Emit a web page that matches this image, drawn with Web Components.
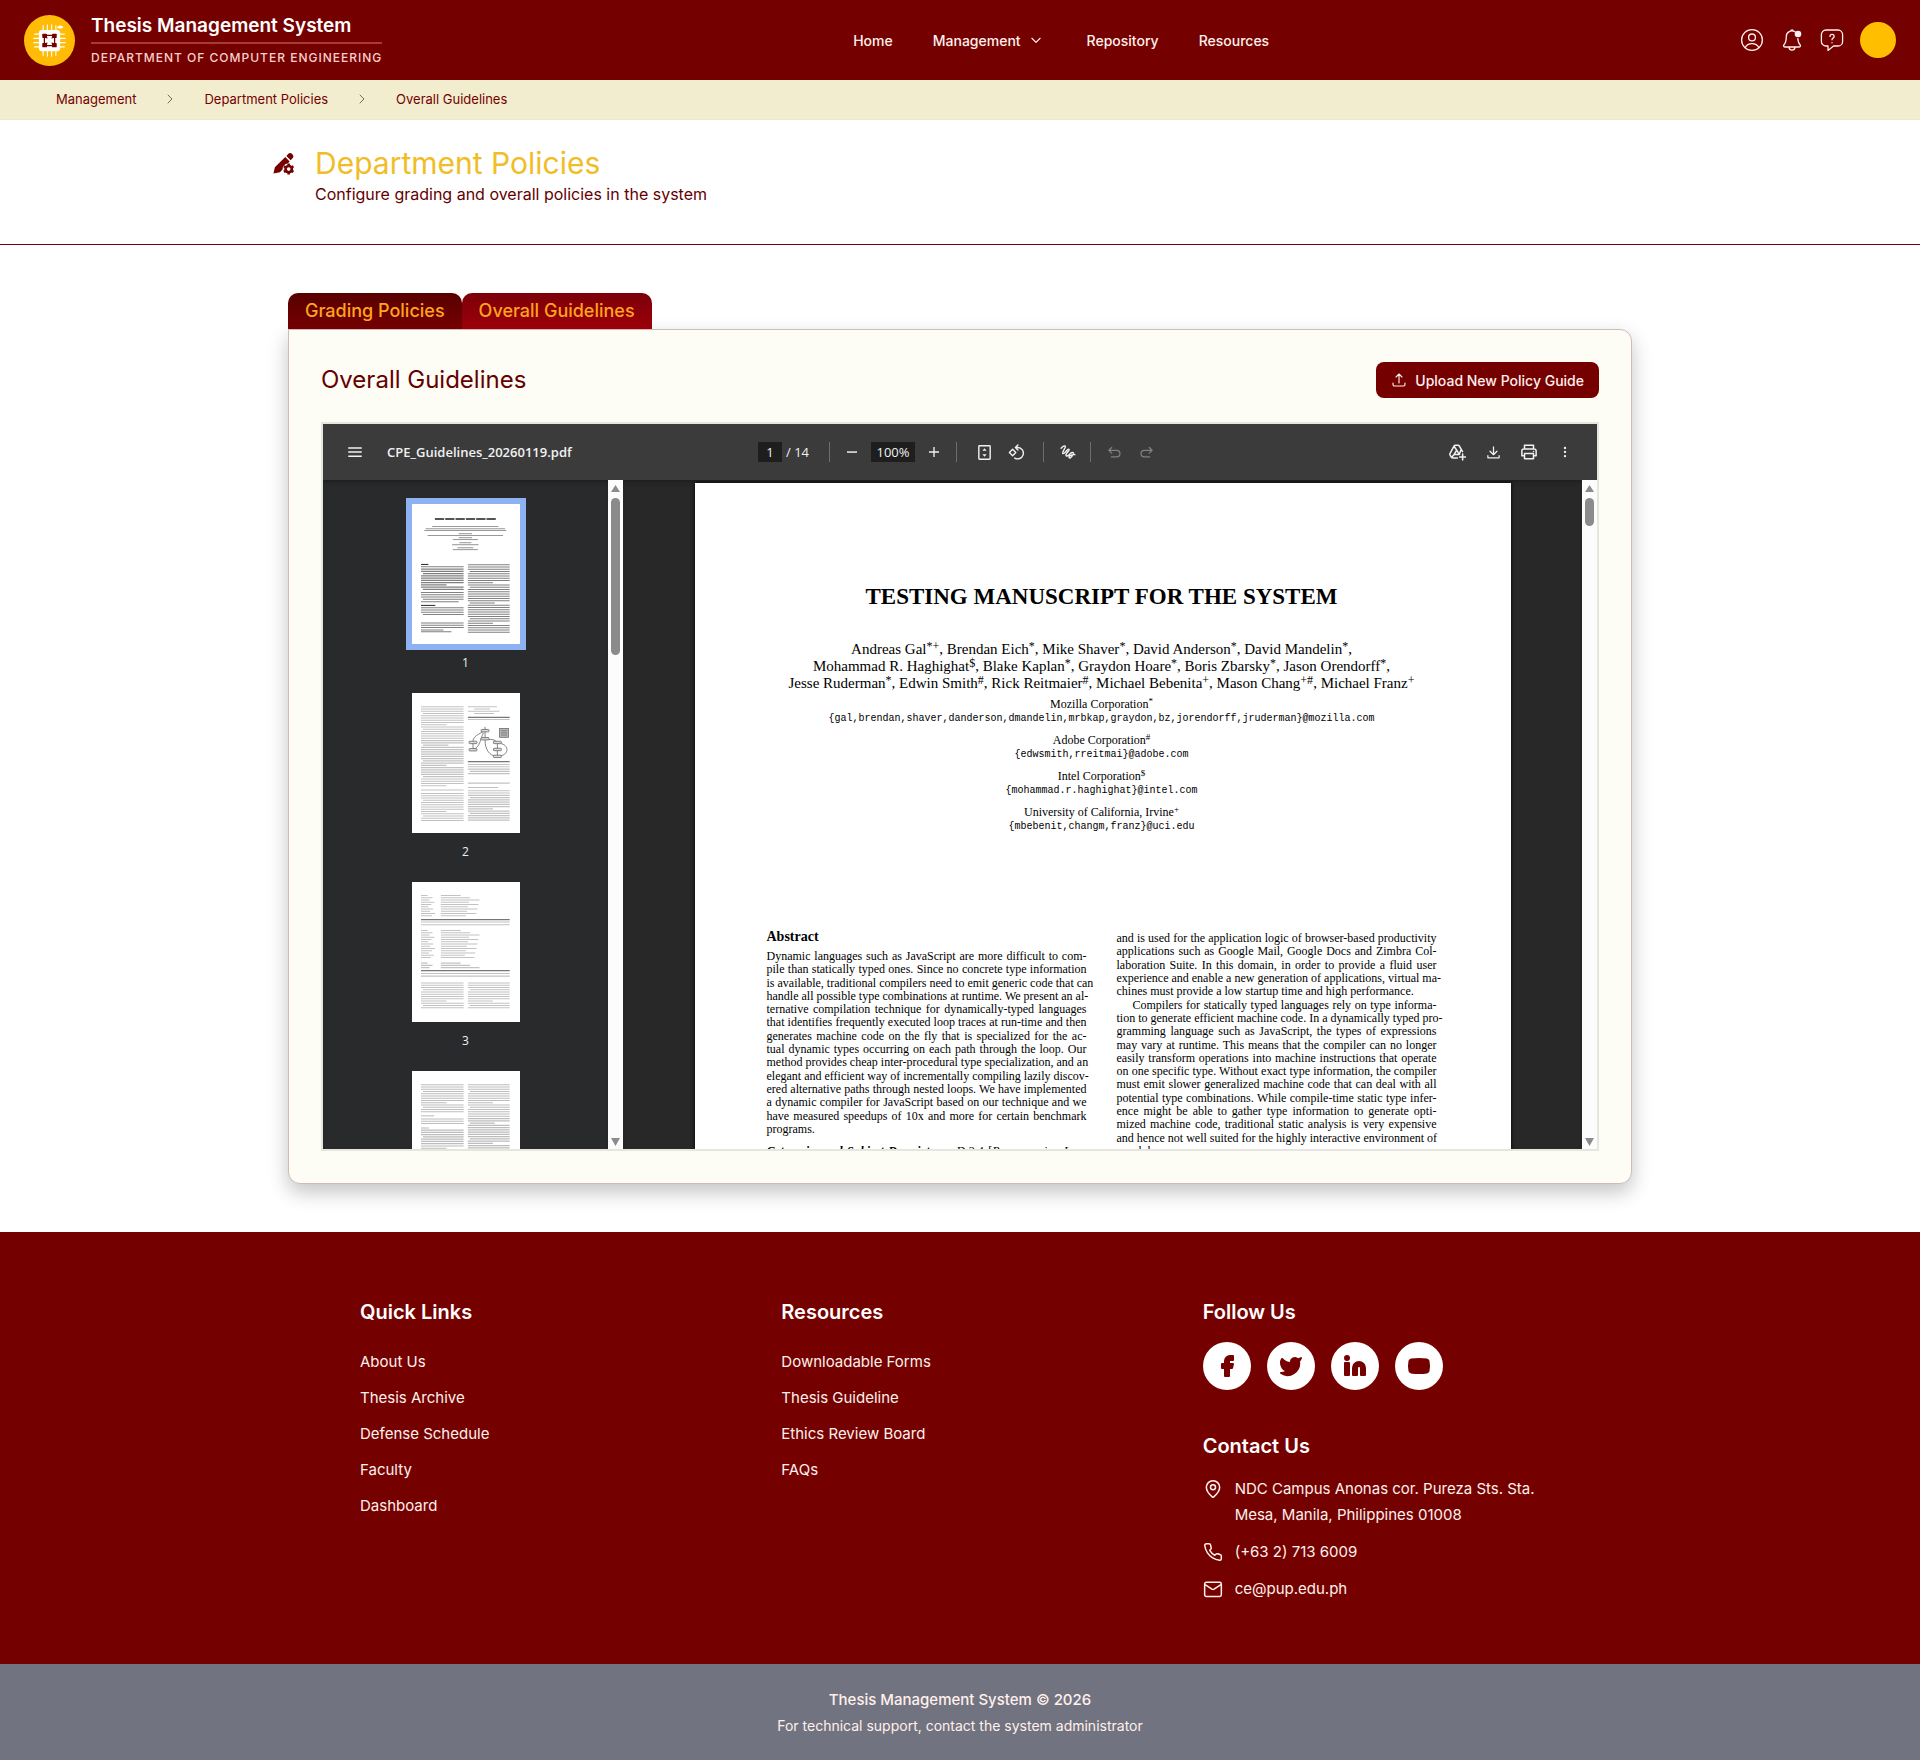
<!DOCTYPE html>
<html lang="en">
<head>
<meta charset="utf-8">
<title>Thesis Management System</title>
<style>
  body {
    margin: 0;
    background: #fff;
    color: #640000;
    font-family: Inter, "Liberation Sans", sans-serif;
    --maroon: #750000;
    --gold: #ffbf00;
  }
</style>
</head>
<body>

<site-header></site-header>
<crumb-trail>
  <a href="#management">Management</a>
  <a href="#policies">Department Policies</a>
  <a href="#guidelines">Overall Guidelines</a>
</crumb-trail>

<main>
  <page-heading>
    <span slot="title">Department Policies</span>
    <span slot="subtitle">Configure grading and overall policies in the system</span>
  </page-heading>
  <policy-card>
    <span slot="title">Overall Guidelines</span>
    <pdf-viewer></pdf-viewer>
  </policy-card>
</main>

<site-footer></site-footer>

<script>
// Attaches an open shadow root filled from a template string.
function render(host, html) {
  const template = document.createElement("template");
  template.innerHTML = html;
  const shadow = host.attachShadow({mode: "open"});
  shadow.appendChild(template.content.cloneNode(true));
  return shadow;
}

const line = (body, width = 2) =>
  `<g fill="none" stroke="currentColor" stroke-width="${ width }" stroke-linecap="round" stroke-linejoin="round">${ body }</g>`;
const solid = body =>
  `<g fill="currentColor" stroke="currentColor" stroke-width="2" stroke-linejoin="round" stroke-linecap="round">${ body }</g>`;

const ICONS = {
  logo: `
    <circle cx="12" cy="12" r="12" fill="#ffbb05"/>
    <g stroke="#fff" stroke-width=".5" stroke-linecap="round">
      <path d="M9 5v14M11 4.6v14.8M13 4.6v14.8M15 5v14M5 9h14M4.6 11h14.8M4.6 13h14.8M5 15h14"/>
    </g>
    <rect x="7" y="7" width="10" height="10" rx="1.4" fill="#fff"/>
    <path d="M9.6 9.6l4.8 4.8M14.4 9.6l-4.8 4.8M9.6 9.6v4.8M14.4 9.6v4.8M9.6 9.6h4.8M9.6 14.4h4.8" stroke="#750000" stroke-width=".6"/>
    <g fill="#750000">
      <rect x="8.6" y="8.8" width="2.2" height="2" rx=".3"/><rect x="13.2" y="8.8" width="2.2" height="2" rx=".3"/>
      <rect x="8.6" y="13.2" width="2.2" height="2" rx=".3"/><rect x="13.2" y="13.2" width="2.2" height="2" rx=".3"/>
    </g>
    <circle cx="12" cy="12" r="1.4" fill="#fff"/>
    <path d="M15.4 5.8q1.7-1.8 3.2 0-1.5 1.4-3.2 0z" fill="#fff"/>`,
  chevronDown: line(`<path d="m5 9 7 7 7-7"/>`),
  chevronRight: line(`<path d="m9 6 6 6-6 6"/>`, 1.5),
  user: line(`<circle cx="12" cy="12" r="10.4"/><circle cx="12" cy="9.4" r="3.4"/><path d="M5.2 19.6c1.2-2.6 3.6-4 6.8-4s5.6 1.4 6.8 4"/>`, 1.3),
  bell: line(`<path d="M15 3.8A5.6 5.6 0 0 0 6.3 8.6c0 4.8-1.1 6.9-2.3 8.2-.9 1-.4 2.2.8 2.2h14.4c1.2 0 1.7-1.2.8-2.2-1-1.1-1.9-2.8-2.2-6.2M10.7 3.2c0-1.6 2.6-1.6 2.6 0M9 19.4c.4 3.6 5.6 3.6 6 0"/>`, 1.3)
    + `<circle cx="18" cy="6" r="3.3" fill="currentColor"/>`,
  help: line(`<path d="M6 2h12a4.600 4.600 0 0 1 4.600 4.600v6.800A4.600 4.600 0 0 1 18 18h-4.500L8 22.400V18H6a4.600 4.600 0 0 1-4.600-4.600V6.600A4.600 4.600 0 0 1 6 2z"/><path d="M10 8.400c0-2.800 4.100-2.600 4.100 0 0 1.700-2.100 1.700-2.100 3.400M12 14.600v.2"/>`, 1.3),
  penGear: `
    <g fill="currentColor">
      <path d="M1.500 22.500 3 15.800 13.800 5.200l4.600 4.600-2 2.200a6 6 0 0 0-5.400 6.200L8.200 21z"/>
      <path d="m15 4.100 1.600-1.700a3.100 3.100 0 0 1 4.600 0 3.100 3.100 0 0 1 0 4.400l-1.700 1.800z"/>
      <circle cx="17.400" cy="17.800" r="4.600"/>
    </g>
    <path d="M17.400 12v11.600M12.400 14.900l10 5.800M12.400 20.700l10-5.800" stroke="currentColor" stroke-width="2.600"/>
    <circle cx="17.400" cy="17.800" r="1.900" fill="#fff"/>`,
  upload: line(`<path d="M3 16.500v2.250A2.250 2.250 0 0 0 5.250 21h13.500A2.250 2.250 0 0 0 21 18.750V16.500M7.500 7.500 12 3l4.500 4.500M12 3v13.500"/>`, 1.7),
  menu: `<path d="M3 5.500h18v2H3zM3 11h18v2H3zM3 16.500h18v2H3z" fill="currentColor"/>`,
  minus: `<path d="M4.500 11h15v2.200h-15z" fill="currentColor"/>`,
  plus: `<path d="M4.500 11H11V4.500h2V11h6.500v2H13v6.500h-2V13H4.500z" fill="currentColor"/>`,
  fitPage: line(`<rect x="4" y="2.500" width="16" height="19" rx="1"/>`)
    + `<path d="m9 9.500 3-3.500 3 3.500zM9 14.500l3 3.500 3-3.500z" fill="currentColor"/>`,
  rotate: line(`<path d="m2 12 4.500-4.500L11 12l-4.500 4.500zM11.500 5H14a8 8 0 1 1-4.500 14.800M14 1.500 10.500 5 14 8.500"/>`),
  draw: line(`<path d="M3 6c2-2.500 5.500-4.500 6-2.500S3.500 12 5.500 13.500 12 6 14 7.500 8 14 10 16.500c1 1.500 4-1 6-3s5-2 4.500 0-4.500 7.500-6 6 2-5 8-4.500"/>`),
  undo: line(`<path d="M7.500 4 3 8.500 7.500 13M3.500 8.500h12a5 5 0 0 1 0 10.500H7"/>`),
  redo: line(`<path d="M16.500 4 21 8.500 16.500 13M20.500 8.500h-12a5 5 0 0 0 0 10.500H17"/>`),
  drive: line(`<path d="M12.500 20H6.500c-1 0-1.800-.5-2.300-1.400l-1.400-2.400c-.4-.8-.4-1.600 0-2.400L7.800 4.400C8.300 3.500 9 3 10 3h3.200c1 0 1.700.5 2.200 1.400l4 7M11.600 9.500l-3.400 5.800h6.800zM11.600 9.500 8 4.300M8.200 15.300l-3.600 4M15 15.300l2.500-6.500M19.500 14.500v8M15.500 18.500h8"/>`),
  download: line(`<path d="M12 3v12M6.500 10l5.500 5.500 5.500-5.500M3 17v3.500h18V17"/>`),
  print: line(`<path d="M6 8V3h12v5M6 17H2.500v-6.500A2.500 2.500 0 0 1 5 8h14a2.500 2.500 0 0 1 2.500 2.500V17H18M6 14h12v7H6z"/>`)
    + `<circle cx="18" cy="11.200" r="1" fill="currentColor"/>`,
  more: `<g fill="currentColor"><circle cx="12" cy="5" r="2"/><circle cx="12" cy="12" r="2"/><circle cx="12" cy="19" r="2"/></g>`,
  facebook: solid(`<path d="M18 2h-3a5 5 0 0 0-5 5v3H7v4h3v8h4v-8h3l1-4h-4V7a1 1 0 0 1 1-1h3z"/>`),
  twitter: solid(`<path d="M22 4s-.7 2.100-2 3.400c1.600 10-9.400 17.300-18 11.600 2.200.1 4.400-.6 6-2C3 15.500.5 9.600 3 5c2.200 2.600 5.600 4.100 9 4-.9-4.200 4-6.600 7-3.800 1.100 0 3-1.200 3-1.200z"/>`),
  linkedin: solid(`<path d="M16 8a6 6 0 0 1 6 6v7h-4v-7a2 2 0 0 0-4 0v7h-4v-7a6 6 0 0 1 6-6z"/><path d="M2 9h4v12H2z"/><circle cx="4" cy="4" r="2"/>`),
  youtube: solid(`<path d="M2.500 17a24.120 24.120 0 0 1 0-10 2 2 0 0 1 1.400-1.400 49.560 49.560 0 0 1 16.200 0A2 2 0 0 1 21.500 7a24.120 24.120 0 0 1 0 10 2 2 0 0 1-1.400 1.400 49.550 49.550 0 0 1-16.200 0A2 2 0 0 1 2.500 17"/>`),
  pin: line(`<path d="M20 10c0 5-5.500 10.200-7.400 11.800a1 1 0 0 1-1.200 0C9.500 20.200 4 15 4 10a8 8 0 0 1 16 0"/><circle cx="12" cy="10" r="3"/>`, 1.8),
  phone: line(`<path d="M22 16.920v3a2 2 0 0 1-2.180 2 19.790 19.790 0 0 1-8.630-3.070 19.500 19.500 0 0 1-6-6 19.790 19.790 0 0 1-3.070-8.670A2 2 0 0 1 4.110 2h3a2 2 0 0 1 2 1.720c.13.960.36 1.900.7 2.810a2 2 0 0 1-.45 2.110L8.090 9.910a16 16 0 0 0 6 6l1.270-1.270a2 2 0 0 1 2.110-.45c.91.340 1.850.57 2.810.7A2 2 0 0 1 22 16.920z"/>`, 1.8),
  mail: line(`<rect x="2" y="4" width="20" height="17" rx="2"/><path d="m3 7 7.700 5.200a2.500 2.500 0 0 0 2.600 0L21 7"/>`, 1.8),
};

class AppIcon extends HTMLElement {
  connectedCallback() {
    if (this.shadowRoot) return;
    const size = this.getAttribute("size") || 24;
    render(this, `
      <style>
        :host { display: block; flex: none; line-height: 0; }
      </style>
      <svg width="${ size }" height="${ size }" viewBox="0 0 24 24" aria-hidden="true">${ ICONS[this.getAttribute("name")] }</svg>
    `);
  }
}

class SiteHeader extends HTMLElement {
  constructor() {
    super();
    render(this, `
      <style>
        :host {
          display: flex;
          justify-content: space-between;
          align-items: center;
          height: 80px;
          padding: 0 24px;
          background: var(--maroon);
          color: #fff0ec;
        }
        .brand, nav, .actions { display: flex; align-items: center; }
        .brand { gap: 16px; color: inherit; text-decoration: none; }
        .name {
          font-size: 19px;
          font-weight: 600;
          line-height: 26px;
          padding-bottom: 3px;
          border-bottom: 2px solid #a63c36;
          color: #fff;
        }
        .dept {
          margin-top: 4px;
          font-size: 12px;
          font-weight: 500;
          line-height: 20px;
          letter-spacing: 1px;
          color: #f8cfcb;
        }
        nav { gap: 40px; font-size: 14px; font-weight: 500; }
        nav a, nav button { color: inherit; text-decoration: none; font: inherit; }
        button { border: 0; padding: 0; background: none; color: inherit; cursor: pointer; }
        nav button { display: flex; align-items: center; gap: 8px; padding-right: 4px; }
        .actions { gap: 16px; }
        .avatar { width: 36px; height: 36px; border-radius: 50%; background: var(--gold); }
      </style>
      <a class="brand" href="#home">
        <app-icon name="logo" size="51"></app-icon>
        <div>
          <div class="name">Thesis Management System</div>
          <div class="dept">DEPARTMENT OF COMPUTER ENGINEERING</div>
        </div>
      </a>
      <nav>
        <a href="#home">Home</a>
        <button type="button">Management <app-icon name="chevronDown" size="14"></app-icon></button>
        <a href="#repository">Repository</a>
        <a href="#resources">Resources</a>
      </nav>
      <div class="actions">
        <button type="button" aria-label="Account"><app-icon name="user"></app-icon></button>
        <button type="button" aria-label="Notifications"><app-icon name="bell"></app-icon></button>
        <button type="button" aria-label="Help"><app-icon name="help"></app-icon></button>
        <button type="button" class="avatar" aria-label="Profile"></button>
      </div>
    `);
  }
}

class CrumbTrail extends HTMLElement {
  connectedCallback() {
    if (this.shadowRoot) return;
    // One named slot per crumb, so a chevron can go between them.
    const links = [...this.children];
    links.forEach((link, i) => link.slot = "crumb" + i);
    render(this, `
      <style>
        :host { display: block; background: #f2edcf; border-bottom: 1px solid #ebe8d3; }
        nav {
          display: flex;
          align-items: center;
          gap: 26px;
          height: 37px;
          padding: 0 56px 2px;
          font-size: 13px;
          color: #7d6b50;
        }
        ::slotted(a) { color: var(--maroon); text-decoration: none; }
      </style>
      <nav aria-label="Breadcrumb">
        ${ links.map((_, i) => `<slot name="crumb${ i }"></slot>`).join(`<app-icon name="chevronRight" size="16"></app-icon>`) }
      </nav>
    `);
  }
}

class PageHeading extends HTMLElement {
  constructor() {
    super();
    render(this, `
      <style>
        :host { display: block; border-bottom: 1px solid #75000f; }
        .inner {
          display: flex;
          gap: 20px;
          max-width: 1376px;
          margin: 0 auto;
          padding: 24px 0 38px;
        }
        app-icon { margin-top: 8px; color: var(--maroon); }
        h1 { margin: 0; font-size: 30px; font-weight: 400; line-height: 38px; color: #f0bd27; }
        p { margin: 0; font-size: 16px; line-height: 24px; }
      </style>
      <div class="inner">
        <app-icon name="penGear" size="23"></app-icon>
        <div>
          <h1><slot name="title"></slot></h1>
          <p><slot name="subtitle"></slot></p>
        </div>
      </div>
    `);
  }
}

class PolicyCard extends HTMLElement {
  constructor() {
    super();
    render(this, `
      <style>
        :host { display: block; width: 70%; margin: 48px auto; }
        .tabs { display: flex; }
        .tabs button {
          height: 36px;
          padding: 0 17px 2px;
          border: 0;
          border-radius: 10px 10px 0 0;
          background: linear-gradient(#580000, #750000);
          color: #ffa41c;
          font: 500 18px Inter, sans-serif;
          cursor: pointer;
        }
        .tabs button[aria-selected="true"] { background: linear-gradient(#7c0009, #9c0009); }
        .card {
          padding: 32px;
          border: 1px solid #cdbcb8;
          border-radius: 0 12px 12px 12px;
          background: #fefdf5;
          box-shadow: 0 8px 20px rgba(0, 0, 0, .24);
        }
        header {
          display: flex;
          justify-content: space-between;
          align-items: center;
          margin-bottom: 24px;
        }
        h2 { margin: 0; font-size: 24px; font-weight: 400; line-height: 32px; }
        .upload {
          display: flex;
          align-items: center;
          gap: 8px;
          height: 36px;
          padding: 0 15px;
          border: 0;
          border-radius: 8px;
          background: var(--maroon);
          color: #fff0ec;
          font: 500 14px Inter, sans-serif;
          cursor: pointer;
        }
      </style>
      <div class="tabs" role="tablist">
        <button type="button" role="tab" aria-selected="false">Grading Policies</button>
        <button type="button" role="tab" aria-selected="true">Overall Guidelines</button>
      </div>
      <section class="card">
        <header>
          <h2><slot name="title"></slot></h2>
          <button type="button" class="upload"><app-icon name="upload" size="16"></app-icon>Upload New Policy Guide</button>
        </header>
        <slot></slot>
      </section>
    `);
  }
}

class PdfScrollbar extends HTMLElement {
  constructor() {
    super();
    render(this, `
      <style>
        :host {
          display: flex;
          flex-direction: column;
          align-items: center;
          justify-content: space-between;
          box-sizing: border-box;
          width: 15px;
          padding: 5px 0 3px;
          background: #fcfcfc;
        }
        svg { display: block; }
        .thumb { width: 9px; height: var(--thumb); margin-top: 6px; border-radius: 5px; background: #8b8b8b; }
      </style>
      <div>
        <svg width="9" height="7" viewBox="0 0 9 7"><path d="M4.500 0 9 7H0z" fill="#8b8b8b"/></svg>
        <div class="thumb"></div>
      </div>
      <svg width="9" height="8" viewBox="0 0 9 8"><path d="M0 0h9L4.500 8z" fill="#8b8b8b"/></svg>
    `);
  }
}

// Ruled rows standing in for set text on a page of 816 by 1056 units.
function rows(x, y, width, count, step = 17) {
  let d = "";
  for (let i = 0; i < count; i++) {
    const indent = i % 7 === 3 ? 14 : 0;
    const length = i % 9 === 8 ? width * .6 : width - indent;
    d += `M${ x + indent } ${ y + i * step }h${ length }`;
  }
  return `<path d="${ d }"/>`;
}

function centred(y, width) {
  return `<path d="M${ 403 - width / 2 } ${ y }h${ width }"/>`;
}

function tableRows(y, count) {
  let out = "";
  for (let i = 0; i < count; i++) {
    out += `<path d="M68 ${ y + i * 17 }h${ 50 + (i * 37) % 60 }M218 ${ y + i * 17 }h${ 150 + (i * 71) % 150 }"/>`;
  }
  return out;
}

const NODES = [[552, 284], [552, 345], [461, 373], [461, 428], [645, 373], [645, 426], [645, 478]];

const THUMBS = [
  `<g stroke="#555" stroke-width="14" stroke-dasharray="70 8">${ centred(113, 460) }</g>
   <g stroke="#999">
     ${ centred(170, 500) }${ centred(186, 600) }${ centred(200, 620) }${ centred(224, 100) }${ centred(238, 570) }
     ${ centred(254, 100) }${ centred(268, 190) }${ centred(292, 90) }${ centred(307, 200) }${ centred(330, 120) }${ centred(344, 190) }
   </g>
   <g stroke="#808080">
     <path d="M68 456h56" stroke="#333"/>
     ${ rows(68, 474, 322, 11) }${ rows(68, 668, 322, 4) }<path d="M68 737h285"/><path d="M68 765h108" stroke="#333"/>
     ${ rows(68, 782, 322, 4) }${ rows(68, 898, 322, 3) }<path d="M68 950h170M68 964h230"/>
     ${ rows(422, 458, 316, 31) }
   </g>`,
  `<g stroke="#c2c2c2">
     ${ rows(68, 104, 322, 36) }${ rows(68, 732, 322, 1) }${ rows(68, 758, 322, 13) }
     <path d="M422 104h220M470 121h120M422 138h240M470 155h150"/>
     ${ rows(422, 200, 316, 1) }${ rows(422, 540, 316, 5) }${ rows(422, 680, 316, 1) }<path d="M422 713h230"/>${ rows(422, 738, 316, 14) }
   </g>
   <path d="M422 184h316M422 517h316" stroke="#777" stroke-width="9"/>
   <g fill="none" stroke="#666" stroke-width="6">
     <path d="M552 255v90M461 373v55M645 373v105M540 290c-60 30-80 50-79 75M540 300c-30 60-20 90-70 125M552 355c0 80 40 115 75 120M570 350c30 0 60 0 70 20M665 380c70 10 70 85 0 95"/>
     <rect x="662" y="268" width="66" height="66" fill="#bbb"/>
     <path d="M672 285h46M672 301h46M672 317h46"/>
     <g fill="#ddd">${ NODES.map(([x, y]) => `<rect x="${ x - 30 }" y="${ y - 9 }" width="60" height="18" rx="5"/>`).join("") }</g>
   </g>`,
  `<g stroke="#c2c2c2">
     ${ tableRows(102, 10) }${ rows(68, 302, 670, 2, 20) }${ tableRows(366, 13) }${ tableRows(612, 3) }
     ${ rows(68, 690, 670, 2, 20) }${ rows(68, 762, 322, 12) }${ rows(422, 762, 316, 12) }
   </g>
   <path d="M68 284h670M68 668h670" stroke="#777" stroke-width="9"/>`,
  `<g stroke="#bcbcbc">
     ${ rows(68, 104, 322, 13) }<path d="M68 338h100"/>${ rows(68, 362, 322, 3) }<path d="M68 430h60"/>${ rows(68, 446, 322, 30) }
     ${ rows(422, 104, 316, 50) }
   </g>`,
];

class PdfThumb extends HTMLElement {
  connectedCallback() {
    if (this.shadowRoot) return;
    const page = Number(this.getAttribute("page"));
    render(this, `
      <style>
        :host { display: block; flex: none; font-size: 12px; line-height: 15px; text-align: center; color: #f0f0f0; }
        button {
          display: block;
          margin-bottom: 5px;
          padding: 0;
          border: 6px solid transparent;
          background: none;
          cursor: pointer;
        }
        :host([selected]) button { border-color: #8db1f1; }
        svg { display: block; background: #fff; }
      </style>
      <button type="button" aria-label="Page ${ page }">
        <svg width="108" height="140" viewBox="0 0 816 1056" preserveAspectRatio="none" stroke-width="8">${ THUMBS[page - 1] }</svg>
      </button>
      <slot></slot>
    `);
  }
}

// Turns each source row into one set line: ">" indents it, a closing "|" ends a paragraph.
function setLines(text) {
  return text.trim().split("\n").map(row => {
    const value = row.trim();
    const cls = value.startsWith(">") ? "in" : value.endsWith("|") ? "end" : "";
    return `<span class="${ cls }">${ value.replace(/^>|\|$/g, "") }</span>`;
  }).join("");
}

class PdfPage extends HTMLElement {
  constructor() {
    super();
    render(this, `
      <style>
        :host {
          display: block;
          box-sizing: border-box;
          flex: none;
          width: 816px;
          padding: 100px 74px 0 72px;
          background: #fff;
          color: #000;
          font-family: "Liberation Serif", serif;
          font-size: 12px;
          line-height: 13px;
          box-shadow: 0 0 4px #000;
        }
        h1 { margin: 0 0 30px; font-size: 23px; line-height: 28px; text-align: center; }
        .authors { font-size: 15px; line-height: 17px; text-align: center; white-space: nowrap; margin: 0 -16px 6px; }
        .org { margin-bottom: 8px; text-align: center; white-space: nowrap; }
        .org code { display: block; font: 10px/15px "Liberation Mono", monospace; }
        sup { font-size: 12px; line-height: 0; vertical-align: 4px; }
        .org sup { font-size: 9px; }
        .columns {
          display: grid;
          grid-template-columns: repeat(2, minmax(0, 1fr));
          gap: 30px;
          margin-top: 95px;
        }
        h2 { margin: 0 0 5px; font-size: 14px; line-height: 16px; }
        p { display: grid; grid-template-columns: minmax(0, 1fr); align-content: space-between; margin: 0; }
        p span { white-space: nowrap; text-align: justify; text-align-last: justify; }
        p .end { text-align-last: left; }
        p .in { padding-left: 16px; }
        .abstract { height: 186px; margin-bottom: 9px; }
        .body { height: 226px; margin-top: 3px; }
      </style>
      <h1>TESTING MANUSCRIPT FOR THE SYSTEM</h1>
      <div class="authors">
        Andreas Gal<sup>*+</sup>, Brendan Eich<sup>*</sup>, Mike Shaver<sup>*</sup>, David Anderson<sup>*</sup>, David Mandelin<sup>*</sup>,<br>
        Mohammad R. Haghighat<sup>$</sup>, Blake Kaplan<sup>*</sup>, Graydon Hoare<sup>*</sup>, Boris Zbarsky<sup>*</sup>, Jason Orendorff<sup>*</sup>,<br>
        Jesse Ruderman<sup>*</sup>, Edwin Smith<sup>#</sup>, Rick Reitmaier<sup>#</sup>, Michael Bebenita<sup>+</sup>, Mason Chang<sup>+#</sup>, Michael Franz<sup>+</sup>
      </div>
      <div class="org">Mozilla Corporation<sup>*</sup><code>{gal,brendan,shaver,danderson,dmandelin,mrbkap,graydon,bz,jorendorff,jruderman}@mozilla.com</code></div>
      <div class="org">Adobe Corporation<sup>#</sup><code>{edwsmith,rreitmai}@adobe.com</code></div>
      <div class="org">Intel Corporation<sup>$</sup><code>{mohammad.r.haghighat}@intel.com</code></div>
      <div class="org">University of California, Irvine<sup>+</sup><code>{mbebenit,changm,franz}@uci.edu</code></div>
      <div class="columns">
        <div>
          <h2>Abstract</h2>
          <p class="abstract">${ setLines(`
            Dynamic languages such as JavaScript are more difficult to com-
            pile than statically typed ones. Since no concrete type information
            is available, traditional compilers need to emit generic code that can
            handle all possible type combinations at runtime. We present an al-
            ternative compilation technique for dynamically-typed languages
            that identifies frequently executed loop traces at run-time and then
            generates machine code on the fly that is specialized for the ac-
            tual dynamic types occurring on each path through the loop. Our
            method provides cheap inter-procedural type specialization, and an
            elegant and efficient way of incrementally compiling lazily discov-
            ered alternative paths through nested loops. We have implemented
            a dynamic compiler for JavaScript based on our technique and we
            have measured speedups of 10x and more for certain benchmark
            programs.|
          `) }</p>
          <p>${ setLines(`<b><i>Categories and Subject Descriptors</i></b>&emsp;D.3.4 [<i>Programming Lan-</i>`) }</p>
        </div>
        <p class="body">${ setLines(`
          and is used for the application logic of browser-based productivity
          applications such as Google Mail, Google Docs and Zimbra Col-
          laboration Suite. In this domain, in order to provide a fluid user
          experience and enable a new generation of applications, virtual ma-
          chines must provide a low startup time and high performance.|
          >Compilers for statically typed languages rely on type informa-
          tion to generate efficient machine code. In a dynamically typed pro-
          gramming language such as JavaScript, the types of expressions
          may vary at runtime. This means that the compiler can no longer
          easily transform operations into machine instructions that operate
          on one specific type. Without exact type information, the compiler
          must emit slower generalized machine code that can deal with all
          potential type combinations. While compile-time static type infer-
          ence might be able to gather type information to generate opti-
          mized machine code, traditional static analysis is very expensive
          and hence not well suited for the highly interactive environment of
          a web browser.|
        `) }</p>
      </div>
    `);
  }
}

class PdfViewer extends HTMLElement {
  constructor() {
    super();
    const tool = (icon, label, size = 17, extra = "") =>
      `<button type="button" aria-label="${ label }" ${ extra }><app-icon name="${ icon }" size="${ size }"></app-icon></button>`;

    render(this, `
      <style>
        :host {
          display: grid;
          grid-template-rows: 56px 669px;
          border: 2px solid #e6e5df;
          font-family: "Open Sans", "Noto Sans", sans-serif;
        }
        .bar {
          display: grid;
          grid-template-columns: 1fr auto 1fr;
          align-items: center;
          padding: 0 14px;
          background: #3b3b3b;
          color: #f1f1f1;
          font-size: 13px;
        }
        .group { display: flex; align-items: center; }
        .group:last-child { justify-content: flex-end; }
        button {
          display: flex;
          justify-content: center;
          align-items: center;
          width: 32px;
          height: 32px;
          padding: 0;
          border: 0;
          background: none;
          color: inherit;
          cursor: pointer;
        }
        button:disabled { color: #808080; }
        .file button, .output button { width: 36px; }
        .file strong { margin-left: 14px; font-weight: 600; }
        .narrow button { width: 30px; }
        .view { padding: 0 4px; }
        input {
          box-sizing: border-box;
          height: 20px;
          padding: 0;
          border: 0;
          background: #1e1e1e;
          color: inherit;
          font: inherit;
          text-align: center;
        }
        .page { width: 24px; }
        .zoom { width: 44px; margin: 0 4px; }
        .total { width: 36px; padding-left: 4px; }
        .rule { width: 1px; height: 20px; margin: 0 7px; background: #6d6d6d; }
        .body {
          display: grid;
          grid-template-columns: 285px 15px 1fr 15px;
          overflow: hidden;
          background: #282828;
        }
        .thumbs, .pages {
          display: flex;
          flex-direction: column;
          align-items: center;
          overflow: hidden;
          box-shadow: inset 0 4px 4px -2px #1d1d1d;
        }
        .thumbs { gap: 17px; padding-top: 18px; background: #282a2b; }
        .pages { padding-top: 3px; }
      </style>
      <div class="bar">
        <div class="group file">${ tool("menu", "Toggle sidebar", 18) }<strong>CPE_Guidelines_20260119.pdf</strong></div>
        <div class="group">
          <input class="page" aria-label="Page number" value="1"><span class="total">/ 14</span>
          <span class="rule"></span>
          <div class="group narrow">
            ${ tool("minus", "Zoom out", 16) }
            <input class="zoom" aria-label="Zoom level" value="100%">
            ${ tool("plus", "Zoom in", 16) }
          </div>
          <span class="rule"></span>
          <div class="group view">${ tool("fitPage", "Fit to page") }${ tool("rotate", "Rotate") }</div>
          <span class="rule"></span>
          ${ tool("draw", "Draw") }
          <span class="rule"></span>
          ${ tool("undo", "Undo", 15, "disabled") }${ tool("redo", "Redo", 15, "disabled") }
        </div>
        <div class="group output">
          ${ tool("drive", "Save to Drive", 18) }${ tool("download", "Download", 15) }${ tool("print", "Print", 18) }${ tool("more", "More actions", 14) }
        </div>
      </div>
      <div class="body">
        <div class="thumbs">
          <pdf-thumb page="1" selected>1</pdf-thumb>
          <pdf-thumb page="2">2</pdf-thumb>
          <pdf-thumb page="3">3</pdf-thumb>
          <pdf-thumb page="4"></pdf-thumb>
        </div>
        <pdf-scrollbar style="--thumb: 157px"></pdf-scrollbar>
        <div class="pages"><pdf-page></pdf-page></div>
        <pdf-scrollbar style="--thumb: 28px"></pdf-scrollbar>
      </div>
    `);
  }
}

class SiteFooter extends HTMLElement {
  constructor() {
    super();
    const links = items => `<ul>${ items.map(item => `<li><a href="#">${ item }</a></li>`).join("") }</ul>`;

    render(this, `
      <style>
        :host { display: block; color: #fff0ec; font-size: 15px; }
        .main { background: var(--maroon); padding: 65px 24px 62px; }
        .columns {
          display: grid;
          grid-template-columns: repeat(3, 1fr);
          gap: 64px;
          max-width: 1200px;
          margin: 0 auto;
        }
        h3 { margin: 0 0 15px; font-size: 20px; font-weight: 600; line-height: 30px; color: #fff; }
        ul { display: grid; gap: 12px; margin: 0; padding: 8px 0 0; list-style: none; line-height: 24px; }
        a { color: inherit; text-decoration: none; }
        .social { display: flex; gap: 16px; margin-bottom: 41px; }
        .social a {
          display: grid;
          place-items: center;
          width: 48px;
          height: 48px;
          border-radius: 50%;
          background: #fff;
          color: var(--maroon);
        }
        address { display: grid; gap: 11px; font-style: normal; line-height: 26px; }
        address > * { display: flex; gap: 12px; }
        address app-icon { margin-top: 3px; }
        .legal { padding: 24px; background: #727380; text-align: center; }
        .legal strong { display: block; margin-bottom: 4px; font-weight: 500; line-height: 24px; }
        .legal small { display: block; font-size: 14px; line-height: 20px; }
      </style>
      <footer>
        <div class="main">
          <div class="columns">
            <section>
              <h3>Quick Links</h3>
              ${ links(["About Us", "Thesis Archive", "Defense Schedule", "Faculty", "Dashboard"]) }
            </section>
            <section>
              <h3>Resources</h3>
              ${ links(["Downloadable Forms", "Thesis Guideline", "Ethics Review Board", "FAQs"]) }
            </section>
            <section>
              <h3>Follow Us</h3>
              <div class="social">
                <a href="#" aria-label="Facebook"><app-icon name="facebook"></app-icon></a>
                <a href="#" aria-label="Twitter"><app-icon name="twitter"></app-icon></a>
                <a href="#" aria-label="LinkedIn"><app-icon name="linkedin"></app-icon></a>
                <a href="#" aria-label="YouTube"><app-icon name="youtube"></app-icon></a>
              </div>
              <h3>Contact Us</h3>
              <address>
                <div><app-icon name="pin" size="20"></app-icon><span>NDC Campus Anonas cor. Pureza Sts. Sta.<br>Mesa, Manila, Philippines 01008</span></div>
                <a href="tel:+6327136009"><app-icon name="phone" size="20"></app-icon>(+63 2) 713 6009</a>
                <a href="mailto:ce@pup.edu.ph"><app-icon name="mail" size="20"></app-icon>ce@pup.edu.ph</a>
              </address>
            </section>
          </div>
        </div>
        <div class="legal">
          <strong>Thesis Management System © 2026</strong>
          <small>For technical support, contact the system administrator</small>
        </div>
      </footer>
    `);
  }
}

customElements.define("app-icon", AppIcon);
customElements.define("site-header", SiteHeader);
customElements.define("crumb-trail", CrumbTrail);
customElements.define("page-heading", PageHeading);
customElements.define("policy-card", PolicyCard);
customElements.define("pdf-scrollbar", PdfScrollbar);
customElements.define("pdf-thumb", PdfThumb);
customElements.define("pdf-page", PdfPage);
customElements.define("pdf-viewer", PdfViewer);
customElements.define("site-footer", SiteFooter);
</script>
</body>
</html>
